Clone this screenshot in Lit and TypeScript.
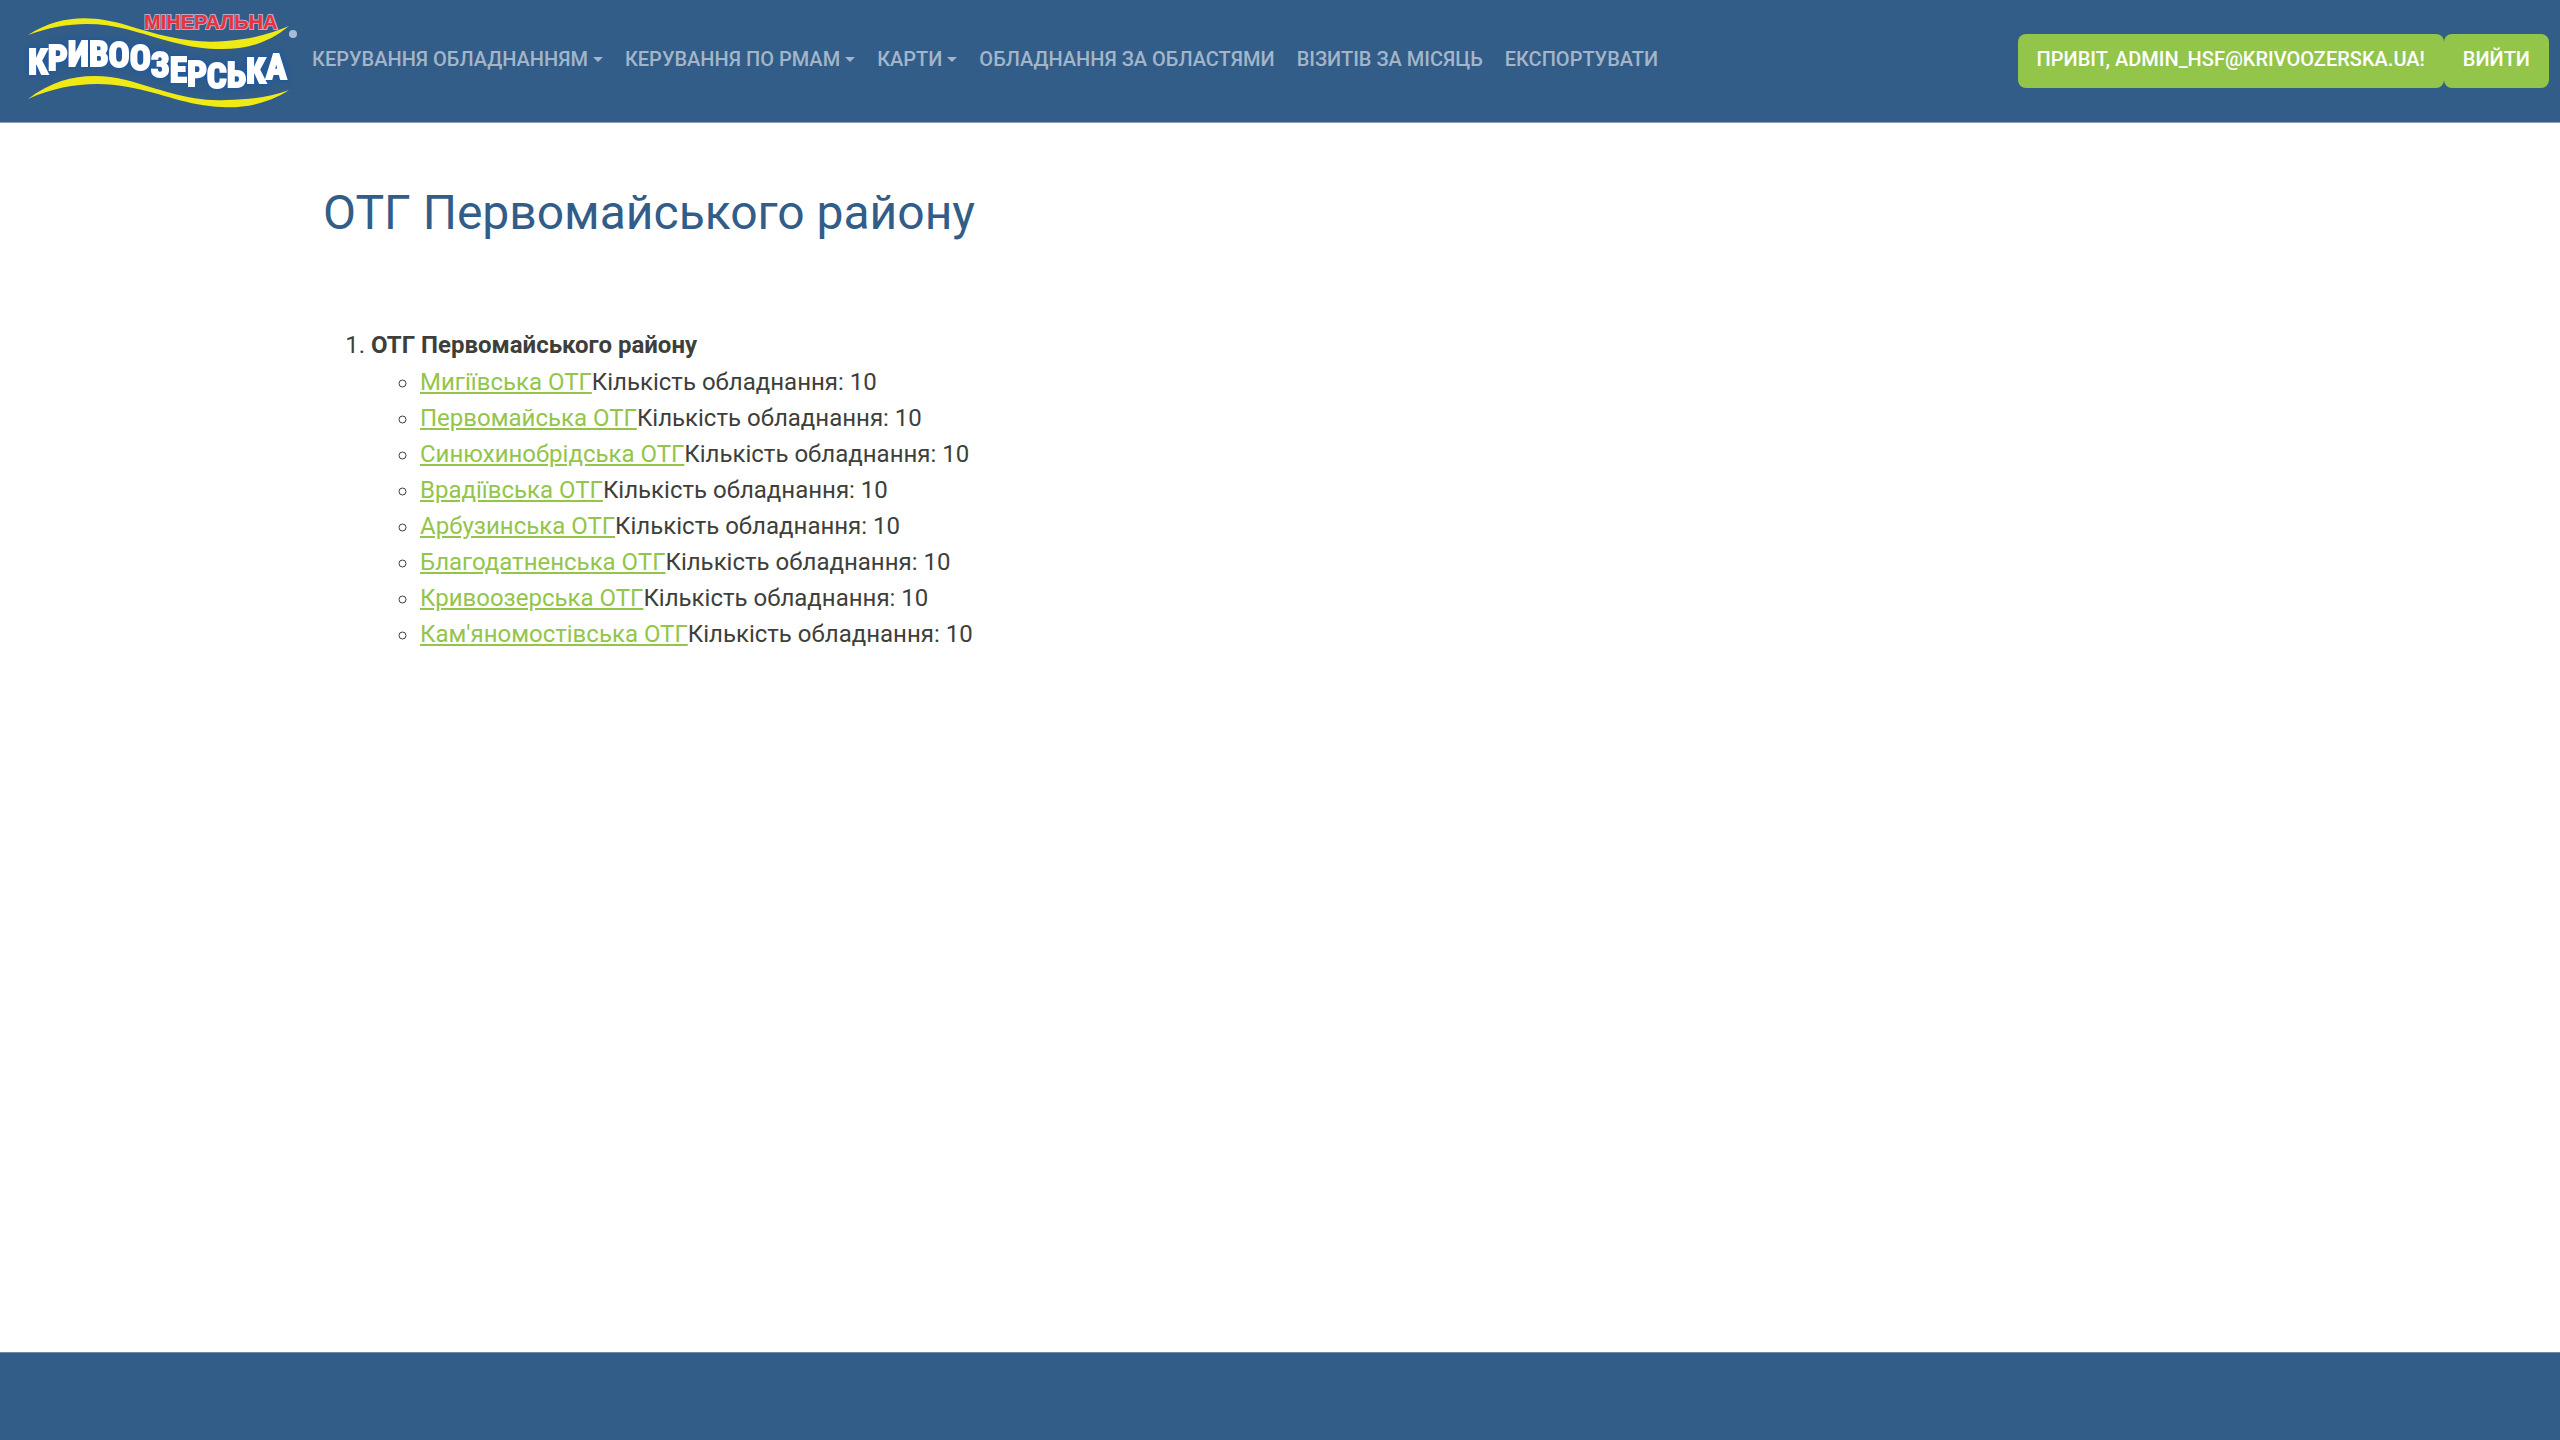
import { LitElement, html, css } from "lit";
import { customElement } from "lit/decorators.js";

interface NavEntry {
  label: string;
  menu?: boolean;
}

const NAV: NavEntry[] = [
  { label: "Керування обладнанням", menu: true },
  { label: "Керування по РМАМ", menu: true },
  { label: "Карти", menu: true },
  { label: "Обладнання за областями" },
  { label: "Візитів за місяць" },
  { label: "Експортувати" },
];

const COMMUNITIES = [
  { name: "Мигіївська ОТГ", count: 10 },
  { name: "Первомайська ОТГ", count: 10 },
  { name: "Синюхинобрідська ОТГ", count: 10 },
  { name: "Врадіївська ОТГ", count: 10 },
  { name: "Арбузинська ОТГ", count: 10 },
  { name: "Благодатненська ОТГ", count: 10 },
  { name: "Кривоозерська ОТГ", count: 10 },
  { name: "Кам'яномостівська ОТГ", count: 10 },
];

@customElement("brand-logo")
export class BrandLogo extends LitElement {
  static styles = css`
    :host {
      display: block;
      line-height: 0;
    }
    .wave {
      fill: #f0ea14;
    }
    .top {
      font: 700 20px "Liberation Sans", Arial, sans-serif;
      fill: #e8323c;
      stroke: #b9a9c4;
      stroke-width: 2px;
      paint-order: stroke;
    }
    .name {
      font: 700 35px "Roboto Condensed", Roboto, sans-serif;
      fill: #ffffff;
      stroke: #ffffff;
      stroke-width: 2px;
      filter: drop-shadow(0 0 2px #1f58a0) drop-shadow(0 0 2px #1f58a0);
    }
    .mark {
      fill: #a9bcd3;
    }
  `;

  render() {
    return html`
      <svg width="272" height="104" viewBox="28 10 272 104" overflow="visible" role="img" aria-label="Мінеральна Кривоозерська">
        <path class="wave" d="M28 35C62 13 96 16 126 25C162 36 190 44 226 41C250 39 268 35 289 26C266 45 242 50 216 49C184 48 160 38 126 29C96 21 62 22 28 35Z" />
        <path class="wave" d="M28 99C62 73 96 73 126 80C160 89 190 102 226 100C250 99 268 98 289 90C266 105 242 108 222 107C188 106 162 93 128 87C96 81 62 84 28 99Z" />
        <text class="name" x="28" y="74" dy="0 -4 -4 0 1 3 7 5 4 2 -1 -4 -4">КРИВООЗЕРСЬКА</text>
        <text class="top" x="144" y="29">МІНЕРАЛЬНА</text>
        <circle class="mark" cx="293" cy="34" r="4" />
      </svg>
    `;
  }
}

@customElement("app-root")
export class AppRoot extends LitElement {
  static styles = css`
    :host {
      display: flex;
      flex-direction: column;
      min-height: 100vh;
      background: #ffffff;
      color: #3e3f3a;
      font: 400 24px/36px Roboto, sans-serif;
    }
    .bar {
      display: flex;
      align-items: flex-start;
      box-sizing: border-box;
      height: 123px;
      padding: 10px 11px 0 28px;
      background: #325d88;
      border-bottom: 1px solid #8aa3bc;
    }
    .nav {
      display: flex;
      flex: 1;
      gap: 22px;
      margin: 34px 0 0 12px;
      padding: 0;
      list-style: none;
    }
    .nav-link {
      display: flex;
      align-items: center;
      padding: 0;
      border: 0;
      background: none;
      color: #a3b5c8;
      font: 500 20px/30px Roboto, sans-serif;
      text-transform: uppercase;
      text-decoration: none;
      white-space: nowrap;
    }
    .menu::after {
      content: "";
      margin-left: 5px;
      border: 5px solid transparent;
      border-top-color: currentColor;
      border-bottom: 0;
    }
    .account {
      display: flex;
      margin-top: 24px;
    }
    .pill {
      padding: 10px 19px 14px;
      border: 0;
      border-radius: 8px;
      background: #93c54b;
      color: #ffffff;
      font: 500 20px/30px Roboto, sans-serif;
      text-transform: uppercase;
      text-decoration: none;
      white-space: nowrap;
    }
    .content {
      flex: 1;
      box-sizing: border-box;
      width: 75%;
      margin: 0 auto;
      padding: 61px 3px 0;
    }
    .title {
      margin: 0;
      color: #325d88;
      font-size: 48px;
      font-weight: 400;
      line-height: 58px;
    }
    .list {
      margin: 85px 0 0;
      padding-left: 48px;
    }
    .sublist {
      margin: 1px 0 0;
      padding-left: 49px;
      list-style: circle;
    }
    .group {
      font-weight: 700;
    }
    .link {
      color: #93c54b;
    }
    .footer {
      height: 87px;
      background: #325d88;
      border-top: 1px solid #6c8bab;
    }
  `;

  render() {
    return html`
      <header class="bar">
        <brand-logo></brand-logo>
        <ul class="nav">
          ${NAV.map(
            (n) => html`<li>
              ${n.menu
                ? html`<button class="nav-link menu" type="button" aria-haspopup="true">${n.label}</button>`
                : html`<a class="nav-link" href="#">${n.label}</a>`}
            </li>`
          )}
        </ul>
        <div class="account">
          <a class="pill" href="#">Привіт, admin_hsf@krivoozerska.ua!</a>
          <button class="pill" type="button">Вийти</button>
        </div>
      </header>
      <main class="content">
        <h1 class="title">ОТГ Первомайського району</h1>
        <ol class="list">
          <li>
            <strong class="group">ОТГ Первомайського району</strong>
            <ul class="sublist">
              ${COMMUNITIES.map(
                (c) => html`<li><a class="link" href="#">${c.name}</a>Кількість обладнання: ${c.count}</li>`
              )}
            </ul>
          </li>
        </ol>
      </main>
      <footer class="footer"></footer>
    `;
  }
}
